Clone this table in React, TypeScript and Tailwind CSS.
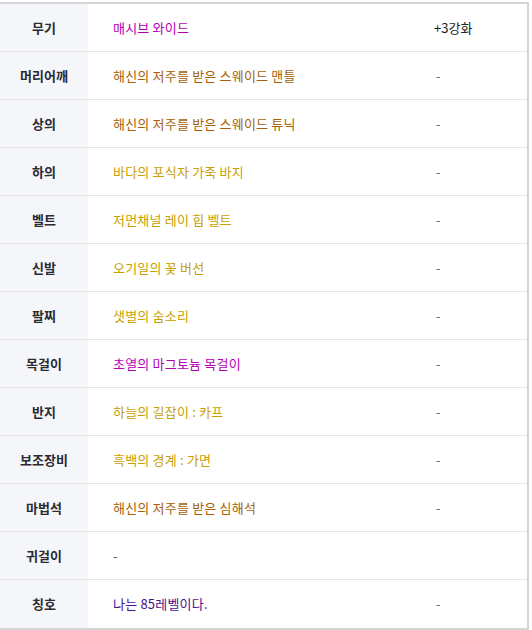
import React from "react";

type Row = { label: string; value: string; color: string; extra: string };

const rows: Row[] = [
  { label: "무기", value: "매시브 와이드", color: "text-[#b400b4]", extra: "+3강화" },
  { label: "머리어깨", value: "해신의 저주를 받은 스웨이드 맨틀", color: "text-[#a4620a]", extra: "-" },
  { label: "상의", value: "해신의 저주를 받은 스웨이드 튜닉", color: "text-[#a4620a]", extra: "-" },
  { label: "하의", value: "바다의 포식자 가죽 바지", color: "text-[#c8a000]", extra: "-" },
  { label: "벨트", value: "저먼채널 레이 힙 벨트", color: "text-[#c8a000]", extra: "-" },
  { label: "신발", value: "오기일의 꽃 버선", color: "text-[#c8a000]", extra: "-" },
  { label: "팔찌", value: "샛별의 숨소리", color: "text-[#c8a000]", extra: "-" },
  { label: "목걸이", value: "초열의 마그토늄 목걸이", color: "text-[#b400b4]", extra: "-" },
  { label: "반지", value: "하늘의 길잡이 : 카프", color: "text-[#c8a000]", extra: "-" },
  { label: "보조장비", value: "흑백의 경계 : 가면", color: "text-[#c8a000]", extra: "-" },
  { label: "마법석", value: "해신의 저주를 받은 심해석", color: "text-[#a4620a]", extra: "-" },
  { label: "귀걸이", value: "-", color: "text-[#555555]", extra: "" },
  { label: "칭호", value: "나는 85레벨이다.", color: "text-[#4b0f8c]", extra: "-" },
];

export default function App() {
  return (
    <div className="w-[532px] h-[630px] bg-white pt-[2px]" style={{ fontFamily: '"Noto Sans CJK KR", "Noto Sans", sans-serif' }}>
      <div className="w-[529px] border-t-2 border-r-2 border-b-2 border-[#d4d4d4]">
        {rows.map((r, i) => (
          <div
            key={r.label}
            className={`flex h-[48px] items-stretch ${i < rows.length - 1 ? "border-b border-[#e6e6e6]" : ""}`}
          >
            <div className="w-[88px] shrink-0 bg-[#f5f6fa] flex items-center justify-center text-[13px] font-bold text-[#2a2a33]">
              {r.label}
            </div>
            <div className={`w-[346px] shrink-0 pl-[25px] flex items-center text-[13px] tracking-[0.2px] ${r.color}`}>
              {r.value}
            </div>
            <div className="flex-1 flex items-center text-[13px] text-[#222]">
              {r.extra === "-" ? <span className="text-[#666] pl-[2px]">-</span> : r.extra}
            </div>
          </div>
        ))}
      </div>
    </div>
  );
}
